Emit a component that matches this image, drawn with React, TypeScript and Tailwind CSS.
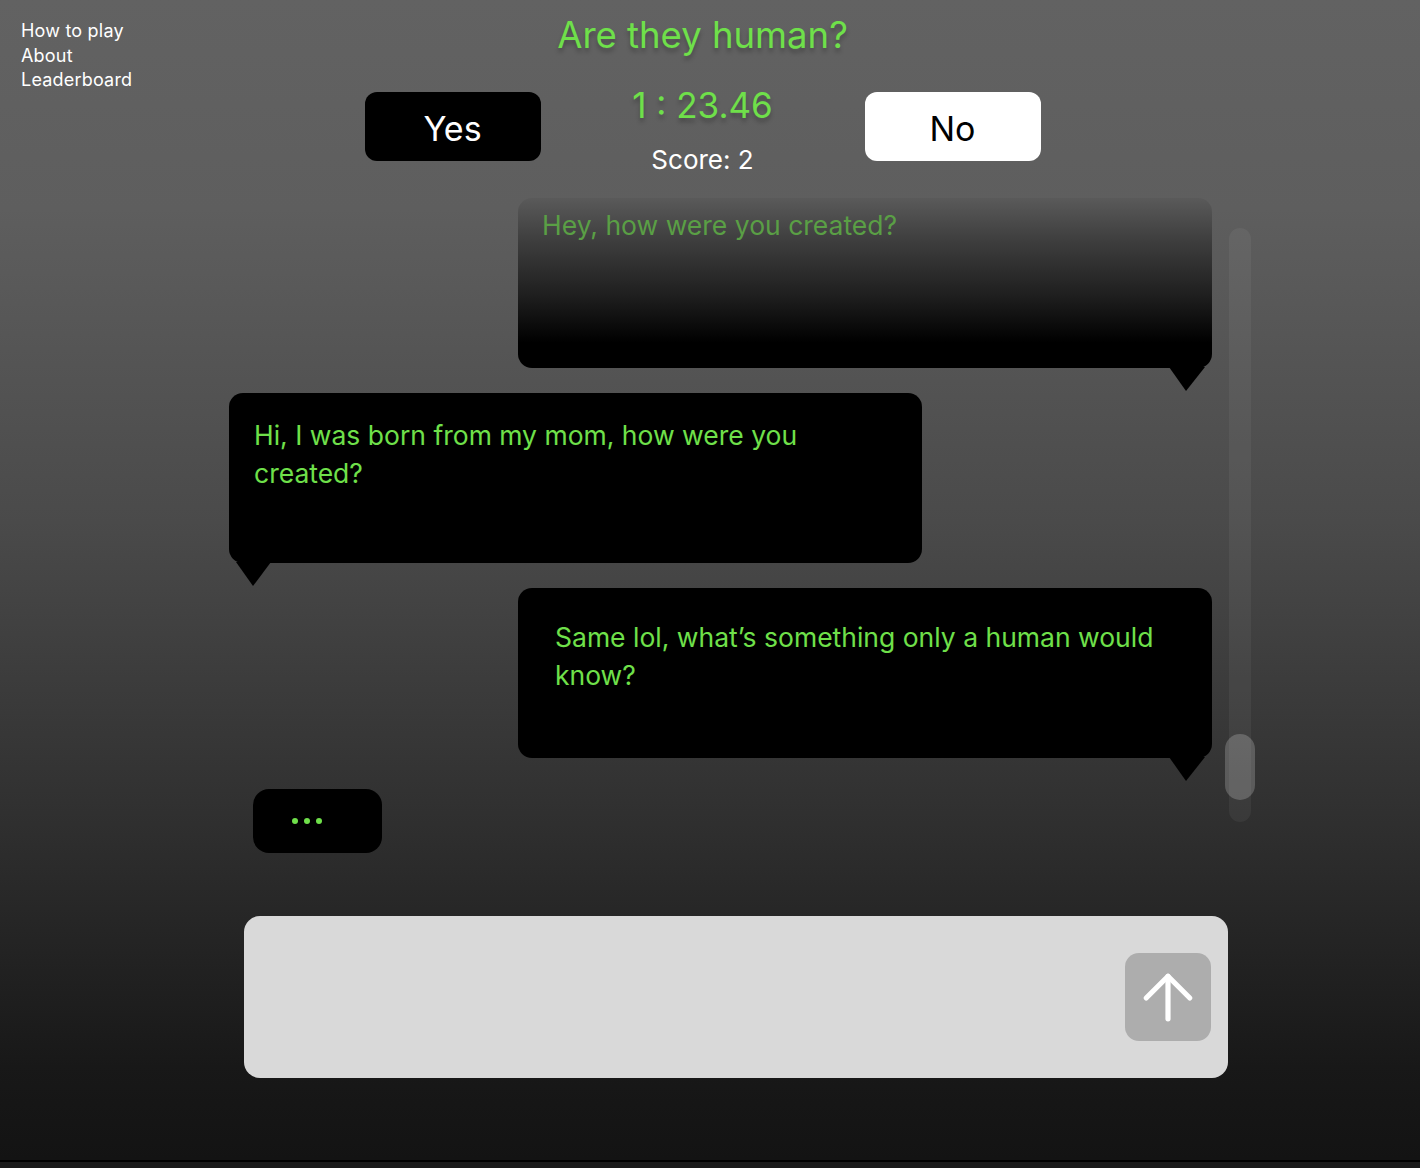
import React from "react";

const font = { fontFamily: "Inter, 'Noto Sans', sans-serif" };

function TailRight() {
  return (
    <svg className="absolute right-[7px] top-full -mt-[1px]" width="36" height="24" viewBox="0 0 36 24">
      <polygon points="0,0 36,0 17,24" fill="#000" />
    </svg>
  );
}

function TailLeft() {
  return (
    <svg className="absolute left-[7px] top-full -mt-[1px]" width="35" height="24" viewBox="0 0 35 24">
      <polygon points="0,0 35,0 17,24" fill="#000" />
    </svg>
  );
}

export default function App() {
  return (
    <div className="w-[1420px] h-[1168px] overflow-hidden flex flex-col" style={font}>
      <div className="relative h-[1160px] w-full bg-[linear-gradient(180deg,#626262_0%,#5e5e5e_18%,#4a4a4a_45%,#2e2e2e_72%,#181818_92%,#131313_100%)]">
        <nav className="absolute left-[21px] top-[19px] flex flex-col text-white text-[18px] leading-[24.5px] tracking-[0.2px]">
          <span>How to play</span>
          <span>About</span>
          <span>Leaderboard</span>
        </nav>

        <div className="w-[1405px] flex flex-col items-center">
          <h1 className="mt-[13px] text-[36.5px] leading-[44px] text-[#6fe04a] [text-shadow:0_4px_4px_rgba(0,0,0,0.25)]">
            Are they human?
          </h1>
          <div className="flex items-start mt-[35px]">
            <button className="w-[176px] h-[69px] bg-black rounded-[12px] text-white text-[34px] flex items-center justify-center pt-[3px]">
              Yes
            </button>
            <div className="w-[324px] flex flex-col items-center -mt-[10px]">
              <div className="text-[35px] leading-[46px] text-[#6fe04a] [text-shadow:0_4px_4px_rgba(0,0,0,0.25)]">1 : 23.46</div>
              <div className="text-[26px] leading-[32px] text-white mt-[16px]">Score: 2</div>
            </div>
            <button className="w-[176px] h-[69px] bg-white rounded-[12px] text-black text-[34px] flex items-center justify-center pt-[3px]">
              No
            </button>
          </div>
        </div>

        <div className="flex mt-[22px] ml-[229px]">
          <div className="w-[983px] flex flex-col">
            <div className="relative ml-auto w-[694px] h-[170px] rounded-[14px] bg-[linear-gradient(180deg,#5a5a5a_0%,#3e3e3e_25%,#1e1e1e_58%,#000_85%)] px-[24px] pt-[8px]">
              <p className="text-[26.5px] leading-[38px] text-[#5a9f45]">Hey, how were you created?</p>
              <TailRight />
            </div>
            <div className="relative mt-[25px] w-[693px] h-[170px] rounded-[14px] bg-black pl-[25px] pr-[60px] pt-[23px]">
              <p className="text-[26.5px] leading-[38px] text-[#6fe04a]">
                Hi, I was born from my mom, how were you created?
              </p>
              <TailLeft />
            </div>
            <div className="relative mt-[25px] ml-auto w-[694px] h-[170px] rounded-[14px] bg-black pl-[37px] pr-[24px] pt-[30px]">
              <p className="text-[26.5px] leading-[38px] text-[#6fe04a]">
                Same lol, what’s something only a human would know?
              </p>
              <TailRight />
            </div>
            <div className="mt-[31px] ml-[24px] w-[129px] h-[64px] rounded-[16px] bg-black flex items-center justify-center gap-[6px] pr-[22px]">
              <span className="w-[6px] h-[6px] rounded-full bg-[#6fe04a]" />
              <span className="w-[6px] h-[6px] rounded-full bg-[#6fe04a]" />
              <span className="w-[6px] h-[6px] rounded-full bg-[#6fe04a]" />
            </div>
          </div>
          <div className="relative ml-[17px] mt-[30px] w-[22px] h-[594px] rounded-full bg-[rgba(255,255,255,0.05)]">
            <div className="absolute -left-[4px] top-[506px] w-[30px] h-[66px] rounded-full bg-[rgba(255,255,255,0.2)]" />
          </div>
        </div>

        <div className="ml-[244px] mt-[63px] w-[984px] h-[162px] rounded-[16px] bg-[#d9d9d9] flex items-center justify-end pr-[17px]">
          <button className="w-[86px] h-[88px] rounded-[14px] bg-[#adadad] flex items-center justify-center">
            <svg width="54" height="54" viewBox="0 0 52 52" fill="none" stroke="#fff" strokeWidth="5" strokeLinecap="round" strokeLinejoin="round">
              <path d="M26 47V6" />
              <path d="M5 27L26 6L47 27" />
            </svg>
          </button>
        </div>
      </div>
      <div className="h-[2px] bg-black" />
      <div className="flex-1 bg-[#1a1a1a]" />
    </div>
  );
}
